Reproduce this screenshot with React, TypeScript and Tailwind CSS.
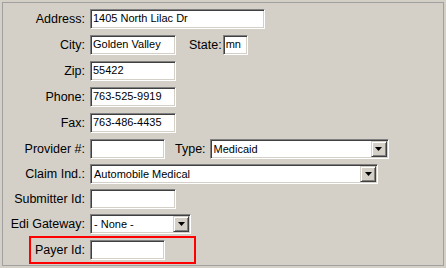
const sunken =
  "bg-white border border-t-[#808080] border-l-[#808080] border-r-white border-b-white shadow-[inset_1px_1px_0_#404040,inset_-1px_-1px_0_#d4d0c8]";

function Field({ w, value }: { w: string; value?: string }) {
  return (
    <div className={`${sunken} ${w} h-[20px] pl-[2px] text-[11px] leading-[16px] text-black whitespace-nowrap overflow-hidden`}>
      {value}
    </div>
  );
}

function Select({ w, value }: { w: string; value: string }) {
  return (
    <div className={`${sunken} ${w} h-[20px] flex items-center p-[1px]`}>
      <span className="flex-1 pl-[2px] text-[11px] leading-[16px] text-black whitespace-nowrap">{value}</span>
      <span className="w-[16px] h-[16px] flex items-center justify-center bg-[#d4d0c8] border border-t-[#d4d0c8] border-l-[#d4d0c8] border-b-[#404040] border-r-[#404040] shadow-[inset_1px_1px_0_#fff,inset_-1px_-1px_0_#808080]">
        <svg width="7" height="4" viewBox="0 0 7 4">
          <polygon points="0,0 7,0 3.5,4" fill="#000" />
        </svg>
      </span>
    </div>
  );
}

function Label({ children }: { children: string }) {
  return (
    <span className="w-[82px] mr-[5px] text-right text-[12.5px] leading-[20px] text-black whitespace-nowrap">
      {children}
    </span>
  );
}

export default function App() {
  return (
    <div className="w-[446px] h-[268px] bg-[#d4d0c8] p-[2px] font-['Liberation_Sans',Arial,sans-serif]">
      <div className="h-full border border-[#a0a0a0] pt-[6px]">
        <div className="flex items-start h-[26px]">
          <Label>Address:</Label>
          <Field w="w-[175px]" value="1405 North Lilac Dr" />
        </div>
        <div className="flex items-start h-[26px]">
          <Label>City:</Label>
          <Field w="w-[86px]" value="Golden Valley" />
          <span className="ml-[13px] mr-[1px] text-[12.5px] leading-[20px]">State:</span>
          <Field w="w-[25px]" value="mn" />
        </div>
        <div className="flex items-start h-[26px]">
          <Label>Zip:</Label>
          <Field w="w-[86px]" value="55422" />
        </div>
        <div className="flex items-start h-[26px]">
          <Label>Phone:</Label>
          <Field w="w-[86px]" value="763-525-9919" />
        </div>
        <div className="flex items-start h-[26px]">
          <Label>Fax:</Label>
          <Field w="w-[86px]" value="763-486-4435" />
        </div>
        <div className="flex items-start h-[25px]">
          <Label>Provider #:</Label>
          <Field w="w-[75px]" />
          <span className="ml-[10px] mr-[4px] text-[12.5px] leading-[20px]">Type:</span>
          <Select w="w-[179px]" value="Medicaid" />
        </div>
        <div className="flex items-start h-[25px]">
          <Label>Claim Ind.:</Label>
          <Select w="w-[288px]" value="Automobile Medical" />
        </div>
        <div className="flex items-start h-[25px]">
          <Label>Submitter Id:</Label>
          <Field w="w-[86px]" />
        </div>
        <div className="flex items-start h-[26px]">
          <Label>Edi Gateway:</Label>
          <Select w="w-[101px]" value="- None -" />
        </div>
        <div className="relative flex items-start h-[20px]">
          <Label>Payer Id:</Label>
          <Field w="w-[75px]" />
          <span className="absolute left-[26px] top-[-4px] w-[167px] h-[28px] border-2 border-[#ff0000]" />
        </div>
      </div>
    </div>
  );
}
